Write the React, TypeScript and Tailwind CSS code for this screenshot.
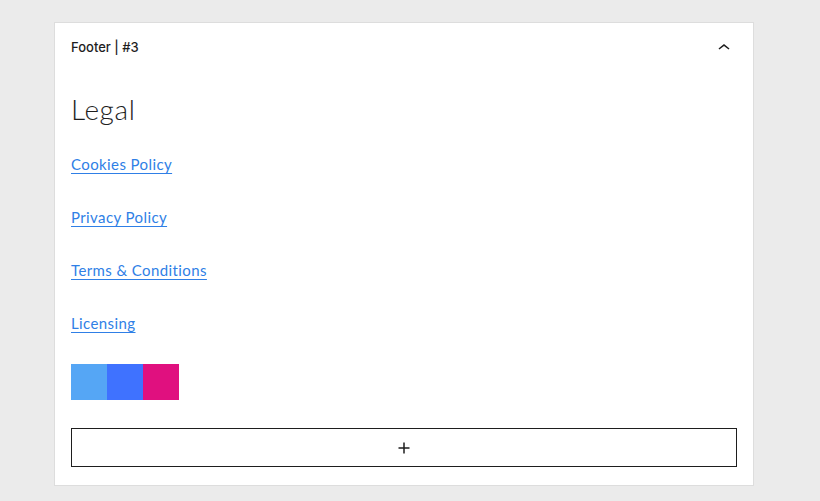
import React from 'react';

const links = ['Cookies Policy', 'Privacy Policy', 'Terms & Conditions', 'Licensing'];
const swatches = ['bg-[#55a6f5]', 'bg-[#3f72ff]', 'bg-[#e0107f]'];

const App = () => {
    return (
        <div className="w-[820px] h-[501px] bg-[#ebebeb] pt-[22px] pl-[54px]">
            <div className="w-[700px] h-[464px] bg-white border border-[#dddddd] flex flex-col">
                {/* Panel header */}
                <div className="h-[48px] pt-[2px] flex items-center justify-between pl-[16px] pr-[17px]">
                    <span className="text-[13px] font-medium text-[#1e1e1e]" style={{ fontFamily: 'Inter, sans-serif' }}>Footer | #3</span>
                    <svg width="24" height="24" viewBox="0 0 24 24" className="text-[#1e1e1e]">
                        <path d="M6.5 12.4L12 8l5.5 4.4-.9 1.2L12 10l-4.6 3.6-.9-1.2z" fill="currentColor" />
                    </svg>
                </div>
                <div className="px-[16px] flex flex-col" style={{ fontFamily: 'Lato, sans-serif' }}>
                    <h2 className="text-[28px] tracking-[0.6px] font-light text-[#1e1e1e] mt-[22px] leading-[32px]">Legal</h2>
                    <div className="flex flex-col gap-[30px] mt-[28px]">
                        {links.map((l) => (
                            <a key={l} href="#" className="text-[15px] tracking-[0.4px] leading-[23px] text-[#2f7fe6] underline underline-offset-[3px]">
                                {l}
                            </a>
                        ))}
                    </div>
                    <div className="flex mt-[29px]">
                        {swatches.map((s) => (
                            <div key={s} className={`w-[36px] h-[36px] ${s}`} />
                        ))}
                    </div>
                    <button className="mt-[28px] h-[39px] w-[666px] border border-[#1e1e1e] flex items-center justify-center">
                        <svg width="24" height="24" viewBox="0 0 24 24" className="text-[#1e1e1e]">
                            <path d="M11.25 6.5h1.5v4.75h4.75v1.5h-4.75v4.75h-1.5v-4.75H6.5v-1.5h4.75z" fill="currentColor" />
                        </svg>
                    </button>
                </div>
            </div>
        </div>
    );
};

export default App;
